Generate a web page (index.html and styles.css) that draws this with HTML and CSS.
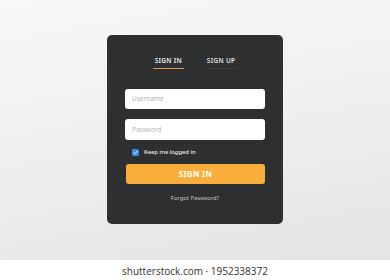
FILE: index.html
```html
<!DOCTYPE html>
<html>
<head>
<meta charset="utf-8">
<link rel="stylesheet" href="styles.css">
</head>
<body>
<div class="stage">
  <div class="card">
    <div class="tabs">
      <span class="tab active">SIGN IN</span>
      <span class="tab">SIGN UP</span>
    </div>
    <div class="field">Username</div>
    <div class="field field-pass">Password</div>
    <label class="keep">
      <span class="check"><svg viewBox="0 0 8 8" width="5" height="5"><path d="M1.3 4.2 L3.2 6 L6.8 2" fill="none" stroke="#fff" stroke-width="1.4" stroke-linecap="round" stroke-linejoin="round"/></svg></span>
      <span>Keep me logged in</span>
    </label>
    <div class="btn">SIGN IN</div>
    <div class="forgot">Forgot Password?</div>
  </div>
</div>
<div class="footer">shutterstock.com · 1952338372</div>
</body>
</html>
```
FILE: styles.css
```css
html, body {
  margin: 0;
  padding: 0;
  background: #fff;
}
body {
  width: 390px;
  height: 280px;
  overflow: hidden;
  font-family: "Noto Sans", "DejaVu Sans", sans-serif;
}
.stage {
  height: 260px;
  box-sizing: border-box;
  padding-top: 35px;
  background: linear-gradient(170deg, #f8f8f8 0%, #efefef 50%, #e4e4e4 100%);
}
.card {
  width: 176px;
  height: 189px;
  box-sizing: border-box;
  margin: 0 auto;
  padding: 21px 18px 0 18px;
  background: #2e2f31;
  border-radius: 5px;
  display: flex;
  flex-direction: column;
}
.tabs {
  display: flex;
  justify-content: center;
  gap: 21px;
}
.tab {
  font-size: 6.5px;
  line-height: 10px;
  font-weight: 600;
  letter-spacing: 0.3px;
  color: #e4e4e4;
  padding: 0 2px 2px;
  border-bottom: 1.5px solid #3d3e41;
}
.tab.active {
  border-bottom-color: #d99e3a;
  color: #f0f0f0;
}
.field {
  margin-top: 19.5px;
  height: 20px;
  background: #fff;
  border-radius: 3px;
  font-size: 6.5px;
  line-height: 20px;
  padding-left: 7px;
  color: #b4b4b4;
}
.field-pass {
  margin-top: 10px;
  height: 21px;
  line-height: 21px;
}
.keep {
  margin-top: 9.5px;
  display: flex;
  align-items: center;
  gap: 5px;
  padding-left: 7px;
  font-size: 5.8px;
  line-height: 7px;
  color: #eeeeee;
  font-weight: 500;
}
.check {
  width: 7px;
  height: 7px;
  border-radius: 1.5px;
  background: #3a8ee6;
  display: flex;
  align-items: center;
  justify-content: center;
}
.btn {
  margin-top: 8px;
  margin-left: 1px;
  height: 20px;
  border-radius: 3px;
  background: #f9ae3b;
  color: #fff;
  font-weight: 700;
  font-size: 8px;
  letter-spacing: 0.3px;
  line-height: 20px;
  text-align: center;
}
.forgot {
  margin-top: 10px;
  text-align: center;
  font-size: 5.8px;
  line-height: 8px;
  color: #c4c4c4;
}
.footer {
  height: 20px;
  line-height: 22px;
  text-align: center;
  font-family: "Open Sans", sans-serif;
  font-size: 10px;
  color: #333;
}
```
